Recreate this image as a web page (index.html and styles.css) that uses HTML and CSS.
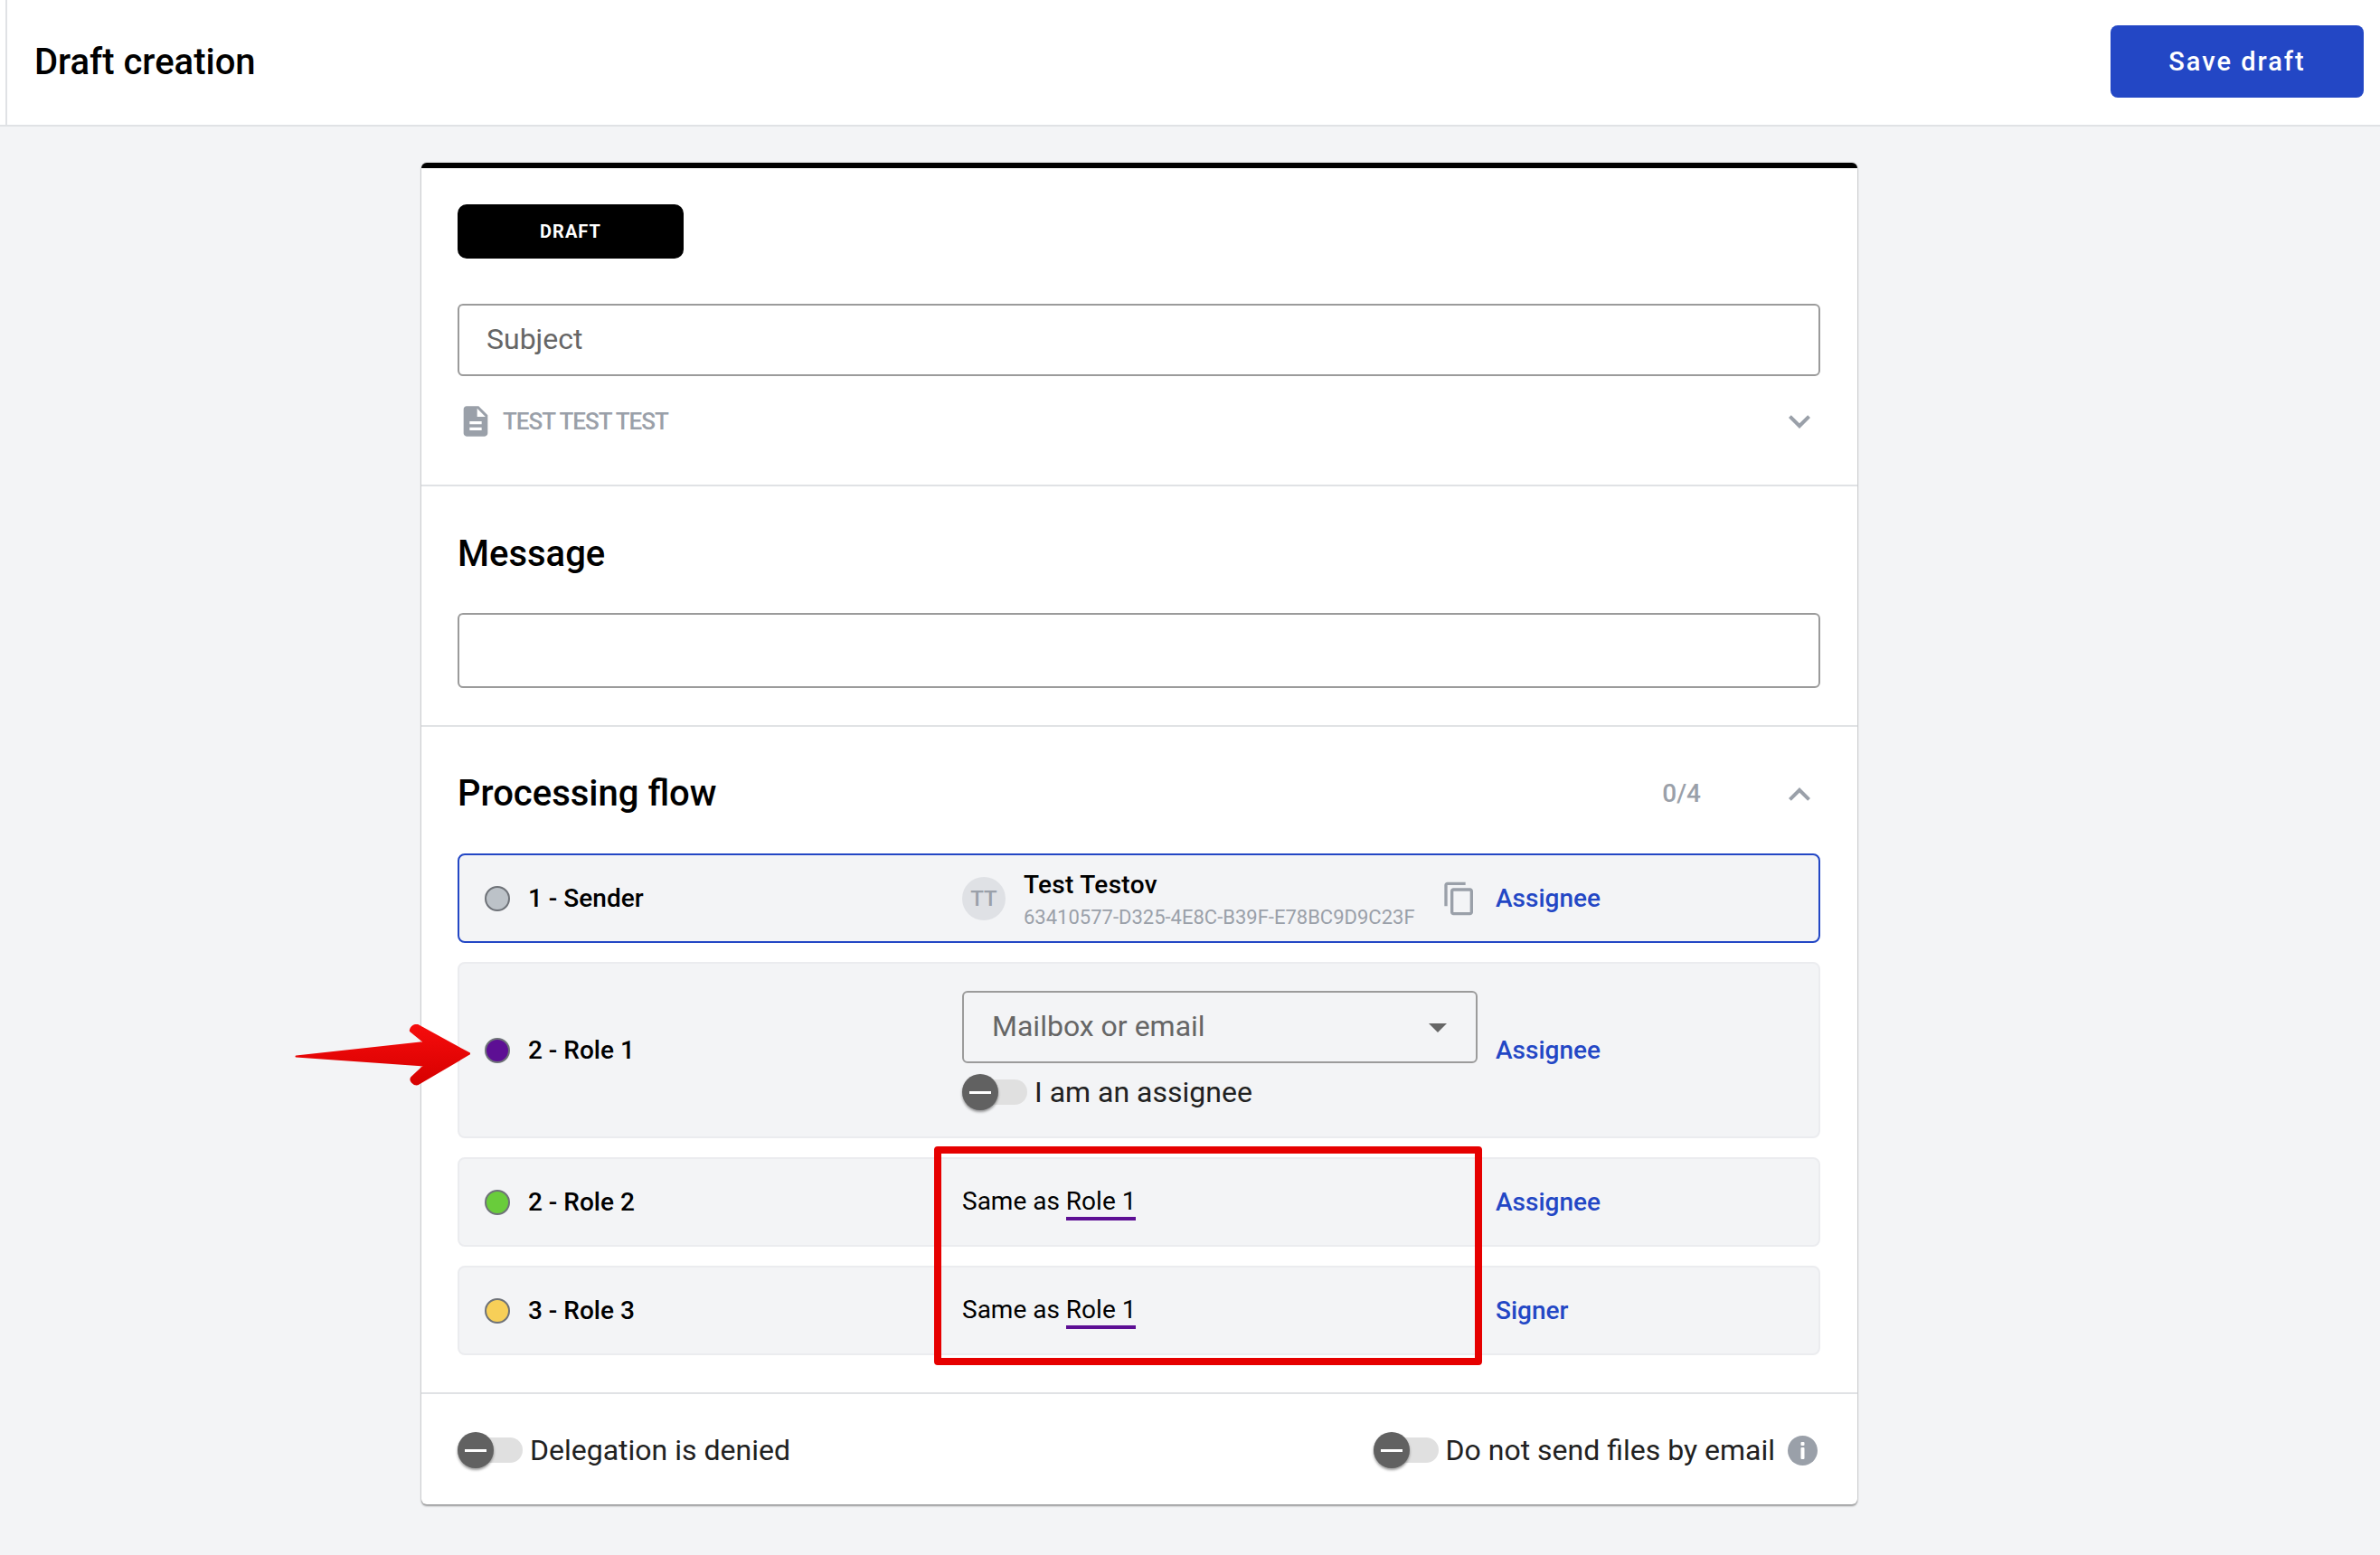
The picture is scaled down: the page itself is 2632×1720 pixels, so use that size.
FILE: index.html
```html
<!DOCTYPE html>
<html lang="en">

<head>
  <meta charset="UTF-8">
  <title>Draft creation</title>
  <link rel="stylesheet" href="styles.css">
</head>

<body>
  <header class="topbar">
    <div class="topbar-inner">
      <h1 class="page-title">Draft creation</h1>
      <button class="save-btn">Save draft</button>
    </div>
  </header>

  <main class="page">
    <div class="card">
      <section class="section section-top">
        <div class="badge">DRAFT</div>
        <div class="field field-subject">Subject</div>
        <div class="doc-row">
          <svg class="doc-icon" viewBox="0 0 24 24"><path d="M14 2H6c-1.1 0-1.99.9-1.99 2L4 20c0 1.1.89 2 1.99 2H18c1.1 0 2-.9 2-2V8l-6-6zm2 16H8v-2h8v2zm0-4H8v-2h8v2zm-3-5V3.5L18.5 9H13z"/></svg>
          <span class="doc-name">TEST TEST TEST</span>
          <svg class="chevron" viewBox="0 0 24 24"><path d="M16.59 8.59L12 13.17 7.41 8.59 6 10l6 6 6-6z"/></svg>
        </div>
      </section>

      <section class="section section-message">
        <h2 class="section-title">Message</h2>
        <div class="field field-message"></div>
      </section>

      <section class="section section-flow">
        <div class="flow-head">
          <h2 class="section-title">Processing flow</h2>
          <span class="flow-count">0/4</span>
          <svg class="chevron" viewBox="0 0 24 24"><path d="M12 8l-6 6 1.41 1.41L12 10.83l4.59 4.58L18 14z"/></svg>
        </div>

        <div class="flow-list">
          <div class="flow-row flow-row-active">
            <div class="role"><span class="dot dot-grey"></span>1 - Sender</div>
            <div class="person">
              <span class="avatar">TT</span>
              <div class="person-info">
                <div class="person-name">Test Testov</div>
                <div class="person-id">63410577-D325-4E8C-B39F-E78BC9D9C23F</div>
              </div>
              <svg class="copy-icon" viewBox="0 0 24 24"><path d="M16 1H4c-1.1 0-2 .9-2 2v14h2V3h12V1zm3 4H8c-1.1 0-2 .9-2 2v14c0 1.1.9 2 2 2h11c1.1 0 2-.9 2-2V7c0-1.1-.9-2-2-2zm0 16H8V7h11v14z"/></svg>
            </div>
            <a class="action">Assignee</a>
          </div>

          <div class="flow-row flow-row-tall">
            <div class="role"><span class="dot dot-purple"></span>2 - Role 1</div>
            <div class="assignee-form">
              <div class="select">Mailbox or email<span class="select-arrow"></span></div>
              <label class="switch">
                <span class="toggle"><span class="knob"></span></span>
                I am an assignee
              </label>
            </div>
            <a class="action">Assignee</a>
          </div>

          <div class="flow-row">
            <div class="role"><span class="dot dot-green"></span>2 - Role 2</div>
            <div class="same-as">Same as <span class="same-role">Role 1</span></div>
            <a class="action">Assignee</a>
          </div>

          <div class="flow-row">
            <div class="role"><span class="dot dot-yellow"></span>3 - Role 3</div>
            <div class="same-as">Same as <span class="same-role">Role 1</span></div>
            <a class="action">Signer</a>
          </div>

          <!-- annotations drawn on top of the screenshot -->
          <svg class="note-arrow" viewBox="0 0 194 68">
            <defs>
              <linearGradient id="arrowFill" x1="0" y1="0" x2="0" y2="1">
                <stop offset="0" stop-color="#f60c0c"/>
                <stop offset="1" stop-color="#d60000"/>
              </linearGradient>
            </defs>
            <path fill="url(#arrowFill)" stroke="url(#arrowFill)" stroke-width="2" stroke-linejoin="round" d="M1.500 35.500 143.400 20 128 7.500C127 5 131 0 135.700 1L193.400 32.500 135.700 66.300C131 67 127 62 129 59L143.400 45.500Z"/>
          </svg>
          <div class="note-box"></div>
        </div>
      </section>

      <section class="section section-options">
        <label class="switch">
          <span class="toggle"><span class="knob"></span></span>
          Delegation is denied
        </label>
        <div class="option-right">
          <label class="switch">
            <span class="toggle"><span class="knob"></span></span>
            Do not send files by email
          </label>
          <svg class="info-icon" viewBox="0 0 33 33">
            <circle cx="16.500" cy="16.500" r="16.500" fill="#9aa0a9"/>
            <rect x="14.500" y="7" width="4" height="4" rx="1" fill="#fff"/>
            <rect x="14.500" y="13" width="4" height="13" rx="1" fill="#fff"/>
          </svg>
        </div>
      </section>
    </div>
  </main>
</body>

</html>
```

FILE: styles.css
```css
* {
  box-sizing: border-box;
}

body {
  margin: 0;
  font-family: 'Roboto', sans-serif;
  background-color: #f3f4f6;
  color: #000;
}

.topbar {
  background-color: #fff;
  padding-left: 6px;
  border-bottom: 2px solid #e0e2e5;
}

.topbar-inner {
  display: flex;
  align-items: center;
  justify-content: space-between;
  height: 138px;
  padding: 0 18px 2px 30px;
  border-left: 2px solid #e0e2e5;
}

.page-title {
  margin: 0;
  font-size: 40px;
  font-weight: 500;
}

.save-btn {
  width: 280px;
  height: 80px;
  border: none;
  border-radius: 8px;
  background-color: #2347c5;
  color: #fff;
  font-family: inherit;
  font-size: 29px;
  font-weight: 500;
  letter-spacing: 2px;
}

.page {
  padding: 40px 0 56px 466px;
}

.card {
  width: 1588px;
  background-color: #fff;
  border-top: 6px solid #000;
  border-radius: 6px;
  box-shadow: 0 2px 2px rgba(0, 0, 0, 0.35), 0 0 2px rgba(0, 0, 0, 0.25);
}

.section {
  padding: 0 41px 0 40px;
  border-bottom: 2px solid #e0e2e5;
}

.section-top {
  padding-top: 40px;
  padding-bottom: 53px;
}

.badge {
  display: flex;
  align-items: center;
  justify-content: center;
  width: 250px;
  height: 60px;
  border-radius: 10px;
  background-color: #000;
  color: #fff;
  font-size: 20px;
  font-weight: 700;
  letter-spacing: 1px;
}

.field {
  border: 2px solid #9b9b9b;
  border-radius: 6px;
  background-color: #fff;
}

.field-subject {
  display: flex;
  align-items: center;
  height: 80px;
  margin-top: 50px;
  padding: 0 0 2px 30px;
  color: #666;
  font-size: 32px;
}

.field-message {
  height: 83px;
  margin-top: 41px;
}

.doc-row {
  display: flex;
  align-items: center;
  height: 34px;
  margin-top: 33px;
}

.doc-icon {
  flex: none;
  width: 40px;
  height: 40px;
  fill: #9aa0a9;
}

.doc-name {
  margin-left: 10px;
  color: #9aa0a9;
  font-size: 26px;
  font-weight: 500;
  letter-spacing: -1px;
}

.chevron {
  flex: none;
  width: 48px;
  height: 48px;
  margin-left: auto;
  margin-right: -1px;
  fill: #9aa0a9;
}

.section-message {
  padding-top: 51px;
  padding-bottom: 41px;
}

.section-title {
  margin: 0;
  font-size: 40px;
  font-weight: 500;
  line-height: 48px;
}

.section-flow {
  padding-top: 50px;
  padding-bottom: 41px;
}

.flow-head {
  display: flex;
  align-items: center;
  height: 48px;
  margin-bottom: 42px;
}

.flow-count {
  margin-left: auto;
  margin-right: 85px;
  padding-bottom: 2px;
  color: #9aa0a9;
  font-size: 28px;
  font-weight: 500;
}

.flow-head .chevron {
  margin-left: 0;
  margin-top: 2px;
}

.flow-list {
  position: relative;
  display: flex;
  flex-direction: column;
  gap: 21px;
}

.flow-row {
  display: grid;
  grid-template-columns: 528px 590px 1fr;
  align-items: center;
  height: 99px;
  padding-left: 28px;
  border: 2px solid #ebecef;
  border-radius: 8px;
  background-color: #f3f4f6;
}

.flow-row-active {
  border-color: #2347c5;
}

.flow-row-tall {
  height: 195px;
}

.role {
  display: flex;
  align-items: center;
  gap: 20px;
  font-size: 28px;
  font-weight: 500;
}

.dot {
  flex: none;
  width: 28px;
  height: 28px;
  border: 2px solid #6e7278;
  border-radius: 50%;
}

.dot-grey { background-color: #bcc2c8; }
.dot-purple { background-color: #5d0f94; }
.dot-green { background-color: #69cc3b; }
.dot-yellow { background-color: #f7cf58; }

.person {
  display: flex;
  align-items: center;
}

.avatar {
  display: flex;
  flex: none;
  align-items: center;
  justify-content: center;
  width: 48px;
  height: 48px;
  border-radius: 50%;
  background-color: #dfe1e5;
  color: #9aa0a9;
  font-size: 24px;
  font-weight: 500;
}

.person-info {
  margin-left: 20px;
  padding-top: 2px;
}

.person-name {
  font-size: 28px;
  font-weight: 500;
  letter-spacing: 0.3px;
  line-height: 34px;
}

.person-id {
  margin-top: 6px;
  color: #9aa0a9;
  font-size: 22px;
  line-height: 26px;
}

.copy-icon {
  flex: none;
  width: 40px;
  height: 40px;
  margin-left: 29px;
  fill: #9aa0a9;
}

.action {
  color: #2347c5;
  font-size: 28px;
  font-weight: 500;
}

.assignee-form {
  display: flex;
  flex-direction: column;
  gap: 13px;
}

.select {
  display: flex;
  align-items: center;
  justify-content: space-between;
  width: 570px;
  height: 80px;
  padding: 0 32px 2px 31px;
  border: 2px solid #9b9b9b;
  border-radius: 6px;
  color: #666;
  font-size: 32px;
}

.select-arrow {
  width: 0;
  height: 0;
  margin-top: 4px;
  border-top: 10px solid #666;
  border-left: 10px solid transparent;
  border-right: 10px solid transparent;
}

.switch {
  display: flex;
  align-items: center;
  gap: 8px;
  color: #212121;
  font-size: 32px;
}

.toggle {
  display: flex;
  flex: none;
  align-items: center;
  width: 72px;
  height: 28px;
  border-radius: 14px;
  background-color: #e0e0e0;
}

.knob {
  display: flex;
  flex: none;
  align-items: center;
  justify-content: center;
  width: 40px;
  height: 40px;
  border-radius: 50%;
  background-color: #616161;
  box-shadow: 0 2px 3px rgba(0, 0, 0, 0.4);
}

.knob::before {
  content: '';
  width: 24px;
  height: 3px;
  background-color: #fff;
}

.same-as {
  padding-top: 3px;
  font-size: 28px;
}

.same-role {
  display: inline-block;
  padding-bottom: 1px;
  border-bottom: 4px solid #5d0f94;
}

.note-arrow {
  position: absolute;
  left: -180px;
  top: 189px;
  width: 194px;
  height: 68px;
}

.note-box {
  position: absolute;
  left: 527px;
  top: 324px;
  width: 606px;
  height: 242px;
  border: 8px solid #e60000;
  border-radius: 4px;
}

.section-options {
  display: flex;
  align-items: center;
  justify-content: space-between;
  height: 122px;
  padding-top: 2px;
  padding-right: 44px;
  border-bottom: none;
}

.option-right {
  display: flex;
  align-items: center;
  gap: 14px;
}

.info-icon {
  flex: none;
  width: 33px;
  height: 33px;
}
```
